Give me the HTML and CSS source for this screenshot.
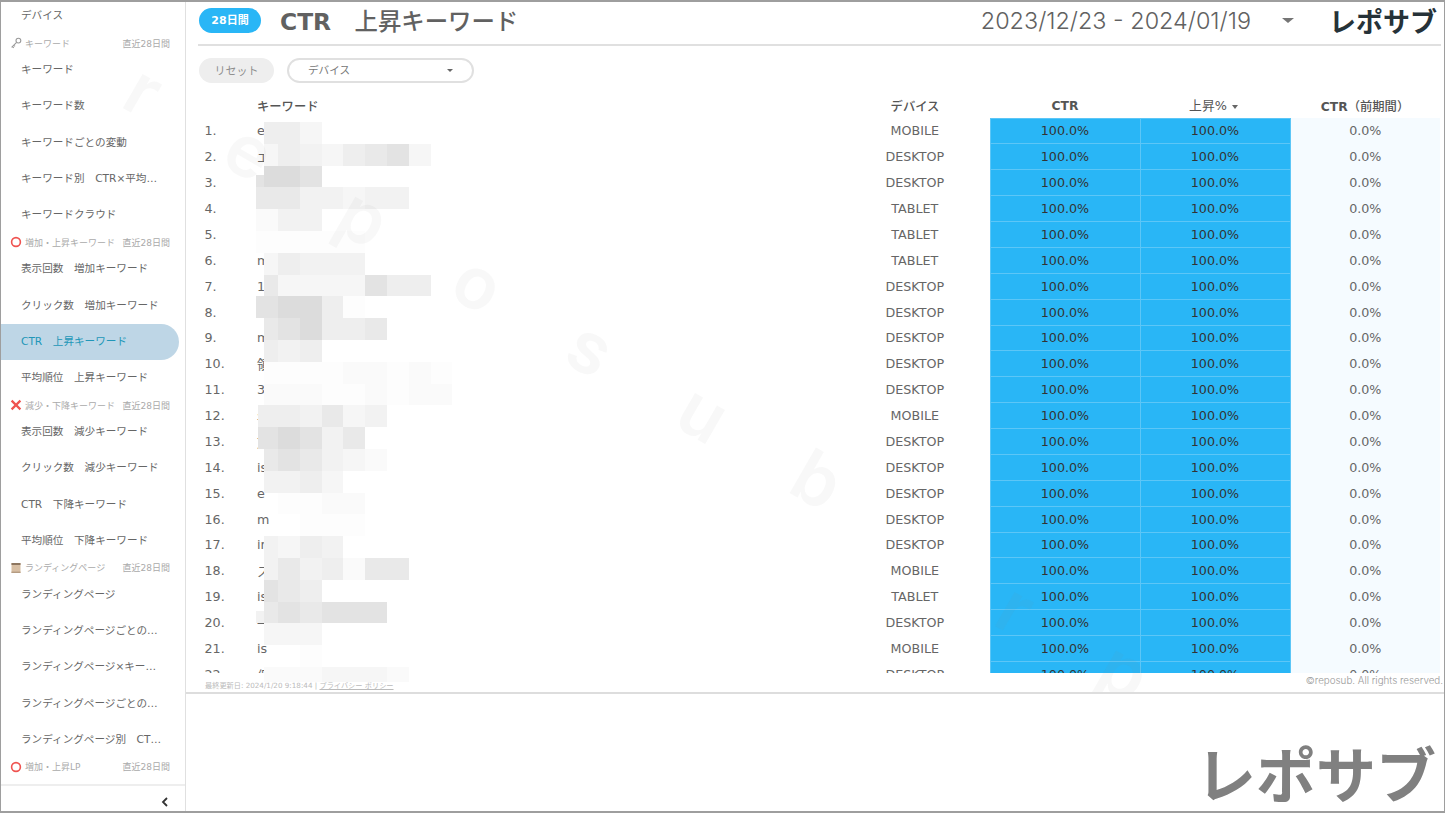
FILE: index.html
```html
<!DOCTYPE html>
<html lang="ja">
<head>
  <meta charset="utf-8">
  <title>CTR 上昇キーワード</title>
  <link rel="stylesheet" href="styles.css">
</head>
<body>
<div class="frame">
  <aside class="sidebar">
    <nav class="side-list">
      <a class="side-item">デバイス</a>
      <div class="side-head">
        <svg class="side-icon" viewBox="0 0 12 12"><circle cx="8.4" cy="3.6" r="2.4" fill="none" stroke="#999" stroke-width="1.1"/><path d="M6.6 5.4 1.6 10.4M2.4 9.6l1.4 1.2M3.8 8.2l1.2 1.1" fill="none" stroke="#999" stroke-width="1.1"/></svg>
        <span>キーワード</span><span class="side-range">直近28日間</span>
      </div>
      <a class="side-item">キーワード</a>
      <a class="side-item">キーワード数</a>
      <a class="side-item">キーワードごとの変動</a>
      <a class="side-item">キーワード別　CTR×平均掲載順位</a>
      <a class="side-item">キーワードクラウド</a>
      <div class="side-head">
        <svg class="side-icon" viewBox="0 0 12 12"><circle cx="6" cy="6" r="4.4" fill="none" stroke="#ef5350" stroke-width="1.6"/></svg>
        <span>増加・上昇キーワード</span><span class="side-range">直近28日間</span>
      </div>
      <a class="side-item">表示回数　増加キーワード</a>
      <a class="side-item">クリック数　増加キーワード</a>
      <a class="side-item active">CTR　上昇キーワード</a>
      <a class="side-item">平均順位　上昇キーワード</a>
      <div class="side-head">
        <svg class="side-icon" viewBox="0 0 12 12"><path d="M1.6 1.6l8.8 8.8M10.4 1.6l-8.8 8.8" fill="none" stroke="#ef5350" stroke-width="2.2"/></svg>
        <span>減少・下降キーワード</span><span class="side-range">直近28日間</span>
      </div>
      <a class="side-item">表示回数　減少キーワード</a>
      <a class="side-item">クリック数　減少キーワード</a>
      <a class="side-item">CTR　下降キーワード</a>
      <a class="side-item">平均順位　下降キーワード</a>
      <div class="side-head">
        <svg class="side-icon" viewBox="0 0 12 12"><rect x="1.5" y="1" width="9" height="10" fill="#d8bfa4"/><rect x="1.5" y="1" width="9" height="2" fill="#8d7660"/><rect x="1.5" y="9.6" width="9" height="1.4" fill="#b59c82"/></svg>
        <span>ランディングページ</span><span class="side-range">直近28日間</span>
      </div>
      <a class="side-item">ランディングページ</a>
      <a class="side-item">ランディングページごとの変動</a>
      <a class="side-item">ランディングページ×キーワード</a>
      <a class="side-item">ランディングページごとの流入数</a>
      <a class="side-item">ランディングページ別　CTR×平均</a>
      <div class="side-head">
        <svg class="side-icon" viewBox="0 0 12 12"><circle cx="6" cy="6" r="4.4" fill="none" stroke="#ef5350" stroke-width="1.6"/></svg>
        <span>増加・上昇LP</span><span class="side-range">直近28日間</span>
      </div>
    </nav>
    <div class="side-foot">
      <svg class="collapse" viewBox="0 0 8 10"><path d="M6 1 2 5l4 4" fill="none" stroke="#333" stroke-width="1.8"/></svg>
    </div>
  </aside>

  <main class="main">
    <header class="topbar">
      <span class="period">28日間</span>
      <h1 class="title"><b>CTR</b>　上昇キーワード</h1>
      <span class="dates">2023/12/23 - 2024/01/19</span>
      <span class="dates-arrow"></span>
      <span class="logo">レポサブ</span>
    </header>

    <div class="filters">
      <button class="reset">リセット</button>
      <div class="select"><span>デバイス</span><span class="select-arrow"></span></div>
    </div>

    <div class="table-wrap">
      <table class="report">
        <colgroup>
          <col class="c-num"><col class="c-key"><col class="c-val"><col class="c-val"><col class="c-val"><col class="c-val">
        </colgroup>
        <thead>
          <tr>
            <th></th>
            <th class="left">キーワード</th>
            <th>デバイス</th>
            <th><b>CTR</b></th>
            <th class="soft">上昇% <span class="sort-arrow"></span></th>
            <th><b>CTR</b>（前期間）</th>
          </tr>
        </thead>
        <tbody>
          <tr><td class="num">1.</td><td>e</td><td>MOBILE</td><td class="hot">100.0%</td><td class="hot">100.0%</td><td class="cold">0.0%</td></tr>
          <tr><td class="num">2.</td><td>エ</td><td>DESKTOP</td><td class="hot">100.0%</td><td class="hot">100.0%</td><td class="cold">0.0%</td></tr>
          <tr><td class="num">3.</td><td></td><td>DESKTOP</td><td class="hot">100.0%</td><td class="hot">100.0%</td><td class="cold">0.0%</td></tr>
          <tr><td class="num">4.</td><td></td><td>TABLET</td><td class="hot">100.0%</td><td class="hot">100.0%</td><td class="cold">0.0%</td></tr>
          <tr><td class="num">5.</td><td></td><td>TABLET</td><td class="hot">100.0%</td><td class="hot">100.0%</td><td class="cold">0.0%</td></tr>
          <tr><td class="num">6.</td><td>m</td><td>TABLET</td><td class="hot">100.0%</td><td class="hot">100.0%</td><td class="cold">0.0%</td></tr>
          <tr><td class="num">7.</td><td>1</td><td>DESKTOP</td><td class="hot">100.0%</td><td class="hot">100.0%</td><td class="cold">0.0%</td></tr>
          <tr><td class="num">8.</td><td></td><td>DESKTOP</td><td class="hot">100.0%</td><td class="hot">100.0%</td><td class="cold">0.0%</td></tr>
          <tr><td class="num">9.</td><td>m</td><td>DESKTOP</td><td class="hot">100.0%</td><td class="hot">100.0%</td><td class="cold">0.0%</td></tr>
          <tr><td class="num">10.</td><td>領</td><td>DESKTOP</td><td class="hot">100.0%</td><td class="hot">100.0%</td><td class="cold">0.0%</td></tr>
          <tr><td class="num">11.</td><td>3</td><td>DESKTOP</td><td class="hot">100.0%</td><td class="hot">100.0%</td><td class="cold">0.0%</td></tr>
          <tr><td class="num">12.</td><td>年</td><td>MOBILE</td><td class="hot">100.0%</td><td class="hot">100.0%</td><td class="cold">0.0%</td></tr>
          <tr><td class="num">13.</td><td>文</td><td>DESKTOP</td><td class="hot">100.0%</td><td class="hot">100.0%</td><td class="cold">0.0%</td></tr>
          <tr><td class="num">14.</td><td>is</td><td>DESKTOP</td><td class="hot">100.0%</td><td class="hot">100.0%</td><td class="cold">0.0%</td></tr>
          <tr><td class="num">15.</td><td>e</td><td>DESKTOP</td><td class="hot">100.0%</td><td class="hot">100.0%</td><td class="cold">0.0%</td></tr>
          <tr><td class="num">16.</td><td>m</td><td>DESKTOP</td><td class="hot">100.0%</td><td class="hot">100.0%</td><td class="cold">0.0%</td></tr>
          <tr><td class="num">17.</td><td>in</td><td>DESKTOP</td><td class="hot">100.0%</td><td class="hot">100.0%</td><td class="cold">0.0%</td></tr>
          <tr><td class="num">18.</td><td>ス</td><td>MOBILE</td><td class="hot">100.0%</td><td class="hot">100.0%</td><td class="cold">0.0%</td></tr>
          <tr><td class="num">19.</td><td>is</td><td>TABLET</td><td class="hot">100.0%</td><td class="hot">100.0%</td><td class="cold">0.0%</td></tr>
          <tr><td class="num">20.</td><td>一</td><td>DESKTOP</td><td class="hot">100.0%</td><td class="hot">100.0%</td><td class="cold">0.0%</td></tr>
          <tr><td class="num">21.</td><td>is</td><td>MOBILE</td><td class="hot">100.0%</td><td class="hot">100.0%</td><td class="cold">0.0%</td></tr>
          <tr><td class="num">22.</td><td>仮</td><td>DESKTOP</td><td class="hot">100.0%</td><td class="hot">100.0%</td><td class="cold">0.0%</td></tr>
        </tbody>
      </table>
    </div>

    <!-- blurred keywords -->
    <div class="mosaic">
      <div class="m-row"><i></i><i class="s4"></i><i class="s4"></i><i class="s6"></i></div>
      <div class="m-row"><i></i><i class="s6"></i><i class="s4"></i><i class="s5"></i><i class="s6"></i><i class="s4"></i><i class="s3"></i><i class="s2"></i><i class="s6"></i></div>
      <div class="m-row"><i class="s2 half"></i><i class="s1"></i><i class="s1"></i><i class="s2"></i></div>
      <div class="m-row"><i class="s3"></i><i class="s3"></i><i class="s3"></i><i class="s5"></i><i class="s5"></i><i class="s6"></i><i class="s5"></i><i class="s5"></i></div>
      <div class="m-row"><i class="s7"></i><i class="s7"></i><i class="s5"></i><i class="s5"></i></div>
      <div class="m-row"><i class="s8"></i><i class="s8"></i><i class="s8"></i><i class="s8"></i><i class="s8"></i><i class="s8"></i></div>
      <div class="m-row"><i></i><i class="s6"></i><i class="s4"></i><i class="s5"></i><i class="s5"></i><i class="s5"></i></div>
      <div class="m-row"><i></i><i class="s3"></i><i class="s6"></i><i class="s6"></i><i class="s6"></i><i class="s6"></i><i class="s2"></i><i class="s4"></i><i class="s4"></i></div>
      <div class="m-row"><i class="s2"></i><i class="s2"></i><i class="s1"></i><i class="s1"></i><i class="s4"></i><i class="s8"></i></div>
      <div class="m-row"><i></i><i class="s3"></i><i class="s2"></i><i class="s1"></i><i class="s4"></i><i class="s4"></i><i class="s3"></i></div>
      <div class="m-row"><i></i><i class="s4"></i><i class="s5"></i><i class="s4"></i></div>
      <div class="m-row"><i></i><i class="s8"></i><i class="s8"></i><i class="s8"></i><i class="s8"></i><i class="s7"></i><i class="s7"></i><i class="s8"></i><i class="s7"></i><i class="s8"></i></div>
      <div class="m-row"><i></i><i class="s7"></i><i class="s7"></i><i class="s7"></i><i class="s8"></i><i class="s8"></i><i class="s7"></i><i class="s8"></i><i class="s7"></i><i class="s7"></i></div>
      <div class="m-row"><i class="s4 inset"></i><i class="s4"></i><i class="s4"></i><i class="s5"></i><i class="s3"></i><i class="s6"></i><i class="s5"></i></div>
      <div class="m-row"><i class="s2 inset"></i><i class="s2"></i><i class="s1"></i><i class="s2"></i><i class="s5"></i><i class="s3"></i></div>
      <div class="m-row"><i></i><i class="s3"></i><i class="s2"></i><i class="s3"></i><i class="s5"></i><i class="s6"></i><i class="s7"></i></div>
      <div class="m-row"><i></i><i class="s5"></i><i class="s5"></i><i class="s4"></i><i class="s6"></i></div>
      <div class="m-row"><i></i><i></i><i class="s8"></i><i class="s8"></i><i class="s7"></i><i class="s7"></i></div>
      <div class="m-row"><i></i><i></i><i></i><i class="s8"></i><i class="s8"></i><i class="s8"></i></div>
      <div class="m-row"><i></i><i class="s5"></i><i class="s6"></i><i class="s4"></i><i class="s5"></i></div>
      <div class="m-row"><i></i><i class="s5"></i><i class="s3"></i><i class="s5"></i><i class="s4"></i><i class="s7"></i><i class="s3"></i><i class="s3"></i></div>
      <div class="m-row"><i></i><i class="s2"></i><i class="s3"></i><i class="s4"></i></div>
      <div class="m-row"><i class="s5 half"></i><i class="s3"></i><i class="s2"></i><i class="s3"></i><i class="s2"></i><i class="s2"></i><i class="s2"></i></div>
      <div class="m-row"><i></i><i class="s6"></i><i class="s6"></i><i class="s6"></i></div>
      <div class="m-row"><i></i><i></i><i></i><i class="s8"></i></div>
      <div class="m-row m-last"><i></i><i class="s7"></i><i class="s7"></i><i class="s7"></i><i class="s6"></i><i class="s6"></i><i class="s6"></i><i class="s7"></i></div>
    </div>

    <footer class="foot">
      <span class="updated">最終更新日: 2024/1/20 9:18:44 | <a>プライバシー ポリシー</a></span>
      <span class="copy">©reposub. All rights reserved.</span>
    </footer>

    <div class="blank">
      <span class="big-logo">レポサブ</span>
    </div>
  </main>

  <div class="watermark">
    <span class="wm-word">reposub</span>
    <span class="wm-word wm-next">rp</span>
  </div>
</div>
</body>
</html>
```

FILE: styles.css
```css
* {
  box-sizing: border-box;
}

html, body {
  margin: 0;
  padding: 0;
  background-color: #fff;
}

body {
  font-family: "DejaVu Sans", "Noto Sans CJK JP", sans-serif;
  color: #666;
}

.frame {
  position: relative;
  display: flex;
  width: 1445px;
  height: 813px;
  overflow: hidden;
  border: 1px solid #9e9e9e;
  border-top-width: 2px;
  border-bottom-width: 2px;
}

/* sidebar */
.sidebar {
  display: flex;
  flex-direction: column;
  flex: 0 0 185px;
  border-right: 1px solid #e0e0e0;
}

.side-list {
  flex: 1;
  margin-top: -4px;
  overflow: hidden;
}

.side-item {
  display: block;
  width: 178px;
  height: 36.2px;
  padding-left: 20px;
  padding-right: 14px;
  font-size: 10.6px;
  line-height: 35.8px;
  color: #666;
  white-space: nowrap;
  overflow: hidden;
  text-overflow: ellipsis;
}

.side-item.active {
  background-color: #bed6e6;
  border-radius: 0 18px 18px 0;
  color: #2196b8;
}

.side-head {
  display: flex;
  align-items: center;
  height: 18.1px;
  padding-left: 9px;
  padding-right: 15px;
  font-size: 9px;
  color: #aaa;
  white-space: nowrap;
}

.side-icon {
  width: 12px;
  height: 12px;
  margin-right: 3px;
  flex: none;
}

.side-range {
  margin-left: auto;
}

.side-foot {
  flex: 0 0 27px;
  display: flex;
  justify-content: flex-end;
  align-items: flex-end;
  padding: 0 16px 4px 0;
  border-top: 2px solid #eee;
}

.collapse {
  width: 8px;
  height: 10px;
}

/* main column */
.main {
  position: relative;
  display: flex;
  flex-direction: column;
  flex: 1;
  min-width: 0;
}

.topbar {
  display: flex;
  align-items: center;
  height: 44px;
  margin: 0 3px 0 12px;
  padding: 0 4px 6px 1px;
  border-bottom: 2px solid #e0e0e0;
}

.period {
  width: 62px;
  height: 25px;
  line-height: 25px;
  border-radius: 13px;
  background-color: #29b6f6;
  color: #fff;
  font-size: 11px;
  font-weight: bold;
  text-align: center;
}

.title {
  margin: 0 0 0 19px;
  font-size: 23.4px;
  font-weight: 500;
  color: #616161;
}

.dates {
  margin-left: auto;
  font-family: Inter, sans-serif;
  font-size: 23.4px;
  font-weight: 300;
  color: #616161;
}

.dates-arrow {
  width: 0;
  height: 0;
  margin: 0 35px 0 31px;
  border-left: 6px solid transparent;
  border-right: 6px solid transparent;
  border-top: 5px solid #757575;
}

.logo {
  font-family: "Noto Sans CJK JP", sans-serif;
  font-size: 27px;
  font-weight: 700;
  line-height: 1;
  color: #263238;
}

.filters {
  display: flex;
  gap: 13px;
  margin: 12px 0 0 13px;
  height: 25px;
}

.reset {
  width: 75px;
  height: 25px;
  padding: 0 0 2px;
  border: none;
  border-radius: 13px;
  background-color: #eee;
  color: #8e8e8e;
  font-family: inherit;
  font-size: 11px;
}

.select {
  display: flex;
  align-items: center;
  justify-content: space-between;
  width: 187px;
  height: 25px;
  padding: 0 19px 2px 19px;
  border: 2px solid #e0e0e0;
  border-radius: 13px;
  color: #777;
  font-size: 10.6px;
}

.select-arrow {
  width: 0;
  height: 0;
  margin-top: 2px;
  border-left: 3px solid transparent;
  border-right: 3px solid transparent;
  border-top: 3px solid #666;
}

/* table */
.table-wrap {
  height: 576px;
  margin: 14px 0 0 13px;
  overflow: hidden;
}

.report {
  width: 1241px;
  table-layout: fixed;
  border-collapse: collapse;
  font-size: 12.7px;
}

.c-num {
  width: 58px;
}

.c-key {
  width: 583px;
}

.c-val {
  width: 150px;
}

.report th {
  height: 21px;
  padding: 0 0 2px;
  font-size: 12.3px;
  font-weight: 500;
  line-height: 14px;
  color: #555;
}

.report th.left {
  text-align: left;
}

.report th.soft {
  font-size: 12.8px;
  font-weight: normal;
  padding-right: 3px;
}

.sort-arrow {
  display: inline-block;
  width: 0;
  height: 0;
  margin-left: 1px;
  vertical-align: middle;
  border-left: 3.5px solid transparent;
  border-right: 3.5px solid transparent;
  border-top: 4px solid #666;
}

.report td {
  height: 25.88px;
  padding: 0;
  text-align: center;
  color: #666;
  white-space: nowrap;
}

.report td:nth-child(2) {
  text-align: left;
}

.report td.num {
  padding-left: 5.5px;
  text-align: left;
}

.report td.hot {
  background-color: #29b6f6;
  border: 1px solid #5cc6f7;
  color: #333;
}

.report td.cold {
  background-color: #f5fbff;
}

/* mosaic */
.mosaic {
  position: absolute;
  top: 120px;
  left: 70px;
}

.m-row {
  display: grid;
  grid-template-columns: 8px 14px repeat(8, 21.8px);
  height: 21.8px;
}

.m-row.m-last {
  height: 15px;
}

.half {
  align-self: end;
  height: 12px;
}

.inset {
  margin-left: 2px;
}

.s1 { background-color: #dcdcdc; }
.s2 { background-color: #e3e3e3; }
.s3 { background-color: #e9e9e9; }
.s4 { background-color: #eeeeee; }
.s5 { background-color: #f2f2f2; }
.s6 { background-color: #f6f6f6; }
.s7 { background-color: #fafafa; }
.s8 { background-color: #fdfdfd; }

/* footer */
.foot {
  display: flex;
  justify-content: space-between;
  align-items: flex-start;
  height: 21px;
  padding: 2px 1px 0 19px;
  border-bottom: 2px solid #ddd;
}

.updated {
  margin-top: 5px;
  font-size: 7.2px;
  color: #bbb;
}

.updated a {
  text-decoration: underline;
}

.copy {
  font-family: Inter, sans-serif;
  font-size: 9.8px;
  font-weight: 300;
  color: #999;
}

.blank {
  flex: 1;
  display: flex;
  justify-content: flex-end;
  align-items: flex-end;
  padding: 0 8px 6px 0;
}

.big-logo {
  font-family: "Noto Sans CJK JP", sans-serif;
  font-size: 60px;
  font-weight: 700;
  line-height: 1.1;
  color: #808080;
}

/* faint diagonal word over the page */
.watermark {
  position: absolute;
  top: 0;
  left: 0;
  width: 100%;
  height: 690px;
  overflow: hidden;
  pointer-events: none;
}

.wm-word {
  position: absolute;
  top: 37px;
  left: 131px;
  font-family: Inter, sans-serif;
  font-size: 72px;
  font-weight: 600;
  letter-spacing: 88px;
  color: rgba(130, 130, 130, 0.06);
  white-space: nowrap;
  transform: rotate(30deg);
  transform-origin: left center;
}

.wm-next {
  top: 555px;
  left: 1003px;
}
```
